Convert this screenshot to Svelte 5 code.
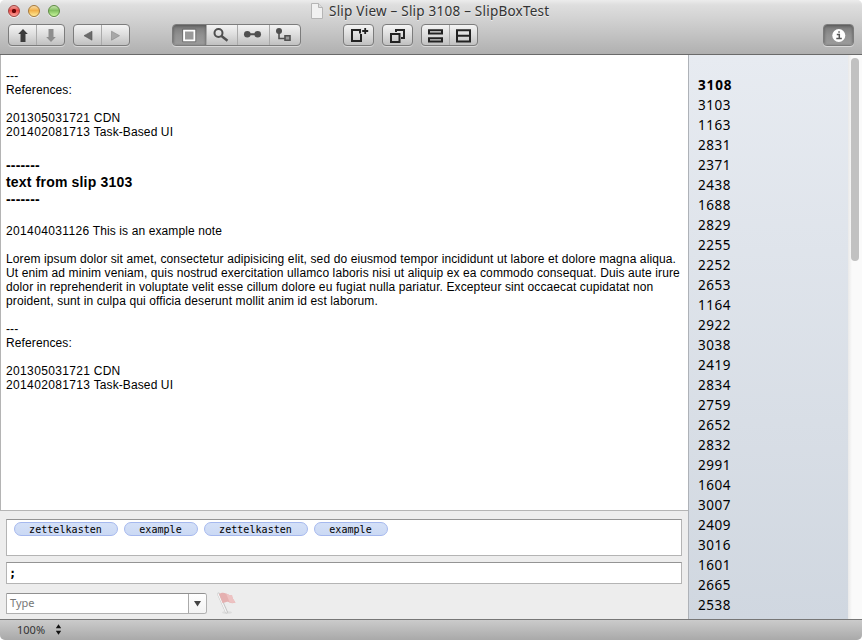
<script>
  // Each line is split into its leading slip id and the remaining text.
  const split = (lines) => lines.map((line) => {
    const [, id, text] = line.match(/^(\d*)(.*)$/);
    return { id, text };
  });
  const before = split(['', '---', 'References:', '', '201305031721 CDN', '201402081713 Task-Based UI']);
  const heading = ['-------', 'text from slip 3103', '-------'];
  const after = split([
    '201404031126 This is an example note',
    '',
    'Lorem ipsum dolor sit amet, consectetur adipisicing elit, sed do eiusmod tempor incididunt ut labore et dolore magna aliqua.',
    'Ut enim ad minim veniam, quis nostrud exercitation ullamco laboris nisi ut aliquip ex ea commodo consequat. Duis aute irure',
    'dolor in reprehenderit in voluptate velit esse cillum dolore eu fugiat nulla pariatur. Excepteur sint occaecat cupidatat non',
    'proident, sunt in culpa qui officia deserunt mollit anim id est laborum.',
    '',
    '---',
    'References:',
    '',
    '201305031721 CDN',
    '201402081713 Task-Based UI'
  ]);
  const tags = ['zettelkasten', 'example', 'zettelkasten', 'example'];
  const slips = [3108, 3103, 1163, 2831, 2371, 2438, 1688, 2829, 2255, 2252, 2653, 1164, 2922, 3038,
    2419, 2834, 2759, 2652, 2832, 2991, 1604, 3007, 2409, 3016, 1601, 2665, 2538];
</script>

<div class="window">
  <header>
    <div class="titlebar">
      <div class="lights">
        <i class="light red"></i><i class="light amber"></i><i class="light green"></i>
      </div>
      <svg class="doc" width="12" height="16" viewBox="0 0 12 16">
        <path d="M.5.5h7l4 4v11H.5z" fill="#f1f1f1" stroke="#b5b5b5" />
        <path d="M7.5.5v4h4" fill="#ddd" stroke="#b5b5b5" />
      </svg>
      <h1>Slip View – Slip 3108 – SlipBoxTest</h1>
    </div>
    <div class="toolbar">
      <div class="group nav">
        <button aria-label="Up"><svg width="28" height="20"><path d="M14 4l4.800 5H16.500v8h-5V9H9.200z" fill="#3c3c3c" /></svg></button>
        <button aria-label="Down"><svg width="28" height="20"><path d="M14 17l4.800-5H16.500V4h-5v8H9.200z" fill="#8e8e8e" /></svg></button>
      </div>
      <div class="group hist">
        <button aria-label="Back"><svg width="28" height="20"><path d="M18 6.200v9L10 10.700z" fill="#6c6c6c" stroke="#555" stroke-width=".6" /></svg></button>
        <button aria-label="Forward"><svg width="28" height="20"><path d="M9.500 6.200v9l8-4.500z" fill="#a8a8a8" stroke="#888" stroke-width=".6" /></svg></button>
      </div>
      <div class="group views">
        <button class="on" aria-label="Slip"><svg width="33" height="20"><path d="M11 5.500h10.500v10H11z" fill="#999" stroke="#fff" stroke-width="2" /><path d="M9.700 4.200h13.100v12.600H9.700z" fill="none" stroke="#555" stroke-width=".6" /></svg></button>
        <button aria-label="Search"><svg width="31" height="20"><circle cx="11.500" cy="8" r="4" fill="none" stroke="#505050" stroke-width="2" /><path d="M14.500 11l6 4.800" stroke="#505050" stroke-width="2.400" /></svg></button>
        <button aria-label="Link"><svg width="31" height="20"><path d="M9 9.300h12" stroke="#505050" stroke-width="2" /><circle cx="9.300" cy="9.300" r="3.300" fill="#505050" /><circle cx="19.700" cy="9.300" r="3.300" fill="#505050" /></svg></button>
        <button aria-label="Tree"><svg width="32" height="20"><circle cx="10" cy="6" r="3" fill="#505050" /><path d="M10 7v6.500h6" fill="none" stroke="#505050" stroke-width="1.600" /><path d="M16 10.700h5v4.500h-5z" fill="#999" stroke="#505050" stroke-width="1.600" /></svg></button>
      </div>
      <div class="group add">
        <button aria-label="New"><svg width="29" height="20"><path d="M8 5h9v11H8z" fill="none" stroke="#222" stroke-width="2" /><path d="M16 3h2v6h-2z" fill="#e2e2e2" /><path d="M18.200 6h6M21.200 3v6" stroke="#222" stroke-width="1.800" /><path d="M17 9v7" stroke="#222" stroke-width="2" /><path d="M16 4v4.500" stroke="#222" stroke-width="2" /></svg></button>
      </div>
      <div class="group dup">
        <button aria-label="Duplicate"><svg width="29" height="20"><path d="M13 7V5h8v8h-3" fill="none" stroke="#222" stroke-width="2" /><path d="M8 9h8.500v8H8z" fill="none" stroke="#222" stroke-width="2" /></svg></button>
      </div>
      <div class="group split">
        <button aria-label="Stacked"><svg width="27" height="20"><path d="M7 5.200h13v3.300H7zM7 13.300h13v3.300H7z" fill="none" stroke="#222" stroke-width="2" /></svg></button>
        <button aria-label="Divided"><svg width="28" height="20"><path d="M7 5.200h13v11.300H7zM7 10.800h13" fill="none" stroke="#222" stroke-width="2" /></svg></button>
      </div>
      <div class="group info">
        <button class="on" aria-label="Info"><svg width="30" height="20"><circle cx="14.800" cy="10.500" r="6.500" fill="#fff" /><path d="M12.800 9.500h2.500v4M12.300 13.500h5.500M14.300 7h1.500" fill="none" stroke="#555" stroke-width="1.500" /></svg></button>
      </div>
    </div>
  </header>

  <main>
    <section class="editor">
      <article>
        {#each before as line}<p><span class="id">{line.id}</span>{line.text}</p>{/each}
        <div class="heading">
          {#each heading as line}<p>{line}</p>{/each}
        </div>
        {#each after as line}<p><span class="id">{line.id}</span>{line.text}</p>{/each}
      </article>
      <form>
        <div class="tags">
          {#each tags as tag}<span class={tag.length > 8 ? 'tag long' : 'tag'}>{tag}</span>{/each}
        </div>
        <div class="field">;</div>
        <div class="row">
          <div class="combo">
            <span>Type</span>
            <div class="arrow"><svg width="9" height="7"><path d="M1 1h7L4.500 6.500z" fill="#444" /></svg></div>
          </div>
          <svg class="flag" width="22" height="23" viewBox="0 0 22 23">
            <ellipse cx="11" cy="20.500" rx="5" ry="1.300" fill="#ddd" />
            <path d="M2.500 2l8 18" stroke="#c4c4c4" stroke-width="2.800" stroke-linecap="round" />
            <path d="M2.200 2l8 18" stroke="#f4f4f4" stroke-width="1.400" stroke-linecap="round" />
            <path d="M3 2c3-2 5-1.500 7-.500s3 1.800 6 1.500c0 3 2 5 3.500 7.500-3 1-4.500 1-7-.500-2-1-4 1-6 1z" fill="#e5b0b0" />
            <path d="M10 1.500c2 1 3 1.800 6 1.500 0 3 2 5 3.500 7.500-3 .8-4.500.5-6-.500z" fill="#edc2c2" />
          </svg>
        </div>
      </form>
    </section>
    <aside>
      <ul>
        {#each slips as slip, i}<li class:current={i === 0}>{slip}</li>{/each}
      </ul>
      <div class="scroller"><div class="thumb"></div></div>
    </aside>
  </main>

  <footer>
    <span>100%</span>
    <svg width="7" height="11"><path d="M.8 4.200L3.500.3l2.700 3.900zM.8 6.800l2.700 3.900 2.700-3.900z" fill="#111" /></svg>
  </footer>
</div>

<style>
  :global(body) { background: #fff; }
  * { box-sizing: border-box; }
  p, h1, ul { margin: 0; padding: 0; }
  svg { display: block; flex: none; }
  .window {
    width: 862px; height: 640px; display: flex; flex-direction: column; overflow: hidden;
    border-radius: 5px; background: #ededed; color: #000;
    font-family: "Noto Sans", sans-serif; font-size: 13px;
  }
  header {
    height: 55px; flex: none; border-bottom: 1px solid #6a6a6a;
    background: linear-gradient(#ececec 0, #dedede 5px, #cfcfcf 22px, #b0b0b0 54px);
  }
  .titlebar { height: 24px; display: flex; padding-left: 8px; }
  .lights { display: flex; gap: 8px; width: 303px; padding-top: 5px; }
  .light { width: 12px; height: 12px; border-radius: 50%; box-shadow: 0 1px 0 #eee; }
  .red { border: 1px solid #a04440; background: radial-gradient(circle at 50% 50%, #690808 0 1.800px, transparent 2.500px), linear-gradient(#eba5a0, #ec4a46 45%, #ffa8a0); }
  .amber { border: 1px solid #a5783b; background: linear-gradient(#f8dca8, #f2b04a 45%, #ffec98); }
  .green { border: 1px solid #5d8a43; background: linear-gradient(#c8e5ae, #82bf60 45%, #c8f79c); }
  .doc { margin-top: 3px; }
  h1 { font-size: 13.500px; font-weight: 400; line-height: 16px; margin: 3px 0 0 6px; color: #333; white-space: nowrap; letter-spacing: .230px; text-shadow: 0 1px 0 #eee; }
  .toolbar { display: flex; height: 22px; padding-left: 8px; }
  .group {
    display: flex; height: 22px; border: 1px solid #7c7c7c; border-radius: 4px;
    background: linear-gradient(#f4f4f4, #dcdcdc 50%, #c0c0c0); box-shadow: 0 1px 0 #d8d8d8; overflow: hidden;
  }
  .group button { flex: 1; height: 20px; padding: 0; border: 0; background: none; display: flex; justify-content: center; overflow: hidden; }
  .group button + button { border-left: 1px solid #aaa; }
  .group button.on { background: linear-gradient(#777, #919191 50%, #9c9c9c); box-shadow: inset 0 1px 3px #555; }
  .nav { width: 57px; }
  .hist { width: 57px; margin-left: 8px; }
  .views { width: 129px; margin-left: 42px; }
  .group.views .on { flex: 0 0 33px; }
  .add { width: 31px; margin-left: 42px; }
  .dup { width: 31px; margin-left: 8px; }
  .split { width: 57px; margin-left: 8px; }
  .info { width: 31px; margin-left: 345px; }
  main { height: 564px; flex: none; display: flex; }
  .editor { width: 688px; display: flex; flex-direction: column; }
  article {
    height: 456px; background: #fff; border-left: 1px solid #b4b4b4; border-bottom: 1px solid #b4b4b4;
    padding-left: 5px; font: 12px/14px "Liberation Sans", Arial, sans-serif; letter-spacing: .110px;
  }
  article p { height: 14px; white-space: pre; }
  .id { letter-spacing: .360px; }
  .heading { margin: 18px 0 16px; font: bold 14px/17px "Liberation Sans", Arial, sans-serif; letter-spacing: .180px; }
  .heading p { height: 17px; }
  form { flex: 1; padding: 8px 6px 0; display: flex; flex-direction: column; }
  .tags {
    height: 37px; background: #fff; border: 1px solid #b4b4b4; border-top-color: #949494;
    display: flex; gap: 6px; padding: 2px 7px; align-items: flex-start;
  }
  .tag {
    width: 74px; height: 14px; border: 1px solid #a5b8ee; border-radius: 7px; background: linear-gradient(#d4e0f7, #cbd9f4);
    font: 10px/13px "DejaVu Sans Mono", monospace; text-align: center; text-indent: -1px; letter-spacing: .050px;
  }
  .tag.long { width: 104px; }
  .field {
    height: 22px; margin-top: 6px; background: #fff; border: 1px solid #b4b4b4; border-top-color: #949494;
    padding-left: 2px; font: bold 12px/20px "DejaVu Sans Mono", monospace;
  }
  .row { display: flex; margin-top: 9px; }
  .combo {
    width: 201px; height: 21px; display: flex; justify-content: space-between; background: #fff;
    border: 1px solid #b0b0b0; border-top-color: #909090; border-radius: 0 3px 3px 0; overflow: hidden;
  }
  .combo span { padding-left: 3px; font-size: 11px; line-height: 17px; color: #777; }
  .arrow { width: 18px; border-left: 1px solid #aaa; display: flex; align-items: center; justify-content: center; background: linear-gradient(#fff, #f3f3f3); }
  .flag { margin: -1px 0 0 9px; }
  aside { width: 174px; display: flex; border-left: 1px solid #aeb2b8; }
  ul { width: 159px; padding: 20px 0 0 9px; list-style: none; background: linear-gradient(#e7ebf1, #d0d7e0); }
  li { height: 20px; line-height: 20px; font-size: 13.500px; letter-spacing: .500px; }
  .current { font-weight: 700; letter-spacing: .850px; }
  .scroller { width: 14px; padding: 3px 3px 0; background: linear-gradient(90deg, #e9e9e9, #fafafa 4px, #fafafa); }
  .thumb { width: 8px; height: 203px; border-radius: 4px; background: #c1c1c1; }
  footer {
    height: 21px; flex: none; border-top: 1px solid #777; background: linear-gradient(#cbcbcb, #a9a9a9);
    display: flex; align-items: center; padding: 0 0 1px 17px; gap: 10px; font-size: 11px; color: #333;
  }
</style>
